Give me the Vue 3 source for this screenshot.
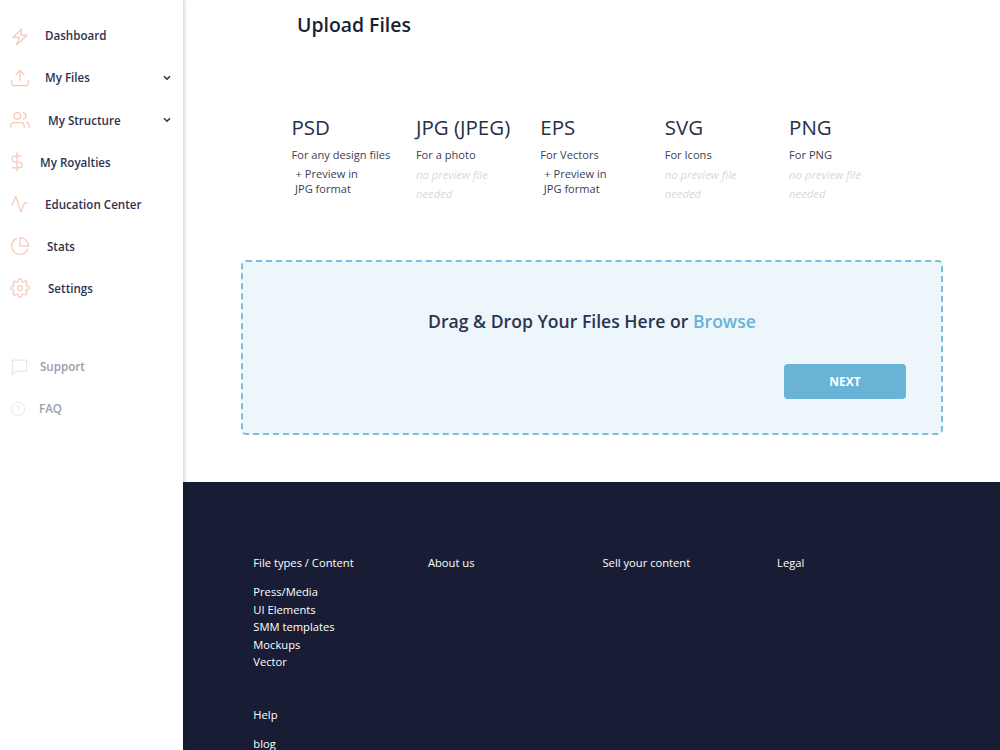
<script setup>
const menu = [
  { label: 'Dashboard', icon: 'bolt', indent: 14, arrow: false },
  { label: 'My Files', icon: 'upload', indent: 14, arrow: true },
  { label: 'My Structure', icon: 'users', indent: 17, arrow: true },
  { label: 'My Royalties', icon: 'dollar', indent: 9, arrow: false },
  { label: 'Education Center', icon: 'pulse', indent: 14, arrow: false },
  { label: 'Stats', icon: 'pie', indent: 16, arrow: false },
  { label: 'Settings', icon: 'gear', indent: 17, arrow: false }
]

const types = [
  { name: 'PSD', use: 'For any design files', note: '+ Preview in JPG format' },
  { name: 'JPG (JPEG)', use: 'For a photo', muted: 'no preview file needed' },
  { name: 'EPS', use: 'For Vectors', note: '+ Preview in JPG format' },
  { name: 'SVG', use: 'For Icons', muted: 'no preview file needed' },
  { name: 'PNG', use: 'For PNG', muted: 'no preview file needed' }
]

const footerCols = ['About us', 'Sell your content', 'Legal']
const footerLinks = ['Press/Media', 'UI Elements', 'SMM templates', 'Mockups', 'Vector']
</script>

<template>
  <div class="page">
    <aside class="sidebar">
      <nav class="menu">
        <a v-for="item in menu" :key="item.label" class="menu-item">
          <span class="ico">
            <svg :class="'i-' + item.icon" viewBox="0 0 24 24" width="20" height="20" fill="none" stroke="#f6c8b8" stroke-width="1.5" stroke-linecap="round" stroke-linejoin="round">
              <path v-if="item.icon === 'bolt'" d="M14 3.5 3.5 13.5H11L8 22.5 20.5 11H13z" />
              <g v-else-if="item.icon === 'upload'">
                <path d="M2 15v4a2 2 0 0 0 2 2h16a2 2 0 0 0 2-2v-4" />
                <path d="M17 8l-5-5-5 5" />
                <path d="M12 3v12" />
              </g>
              <g v-else-if="item.icon === 'users'">
                <path d="M17 21v-2a4 4 0 0 0-4-4H5a4 4 0 0 0-4 4v2" />
                <circle cx="9" cy="7" r="4" />
                <path d="M23 21v-2a4 4 0 0 0-3-3.87" />
                <path d="M16 3.13a4 4 0 0 1 0 7.75" />
              </g>
              <g v-else-if="item.icon === 'dollar'">
                <path d="M12 1v22" />
                <path d="M17 5H9.5a3.5 3.5 0 0 0 0 7h5a3.5 3.5 0 0 1 0 7H6" />
              </g>
              <path v-else-if="item.icon === 'pulse'" d="M2.4 13 7 3l6 18.5L17 11h3.5" />
              <g v-else-if="item.icon === 'pie'">
                <path d="M21.21 15.89A10 10 0 1 1 8 2.83" />
                <path d="M22 12A10 10 0 0 0 12 2v10z" />
              </g>
              <g v-else>
                <circle cx="12" cy="12" r="3" />
                <path d="M19.4 15a1.65 1.65 0 0 0 .33 1.82l.06.06a2 2 0 1 1-2.83 2.83l-.06-.06a1.65 1.65 0 0 0-2.82 1.17V21a2 2 0 0 1-4 0v-.09a1.65 1.65 0 0 0-2.82-1.12l-.06.06a2 2 0 1 1-2.83-2.83l.06-.06a1.65 1.65 0 0 0-1.17-2.82H3a2 2 0 0 1 0-4h.09a1.65 1.65 0 0 0 1.12-2.82l-.06-.06a2 2 0 1 1 2.83-2.83l.06.06a1.65 1.65 0 0 0 1.82.33H9a1.65 1.65 0 0 0 1-1.51V3a2 2 0 0 1 4 0v.09a1.65 1.65 0 0 0 2.82 1.12l.06-.06a2 2 0 1 1 2.83 2.83l-.06.06a1.65 1.65 0 0 0 1.17 2.82H21a2 2 0 0 1 0 4h-.09a1.65 1.65 0 0 0-1.51 1z" />
              </g>
            </svg>
          </span>
          <span class="label" :style="{ marginLeft: item.indent + 'px' }">{{ item.label }}</span>
          <svg v-if="item.arrow" class="chev" viewBox="0 0 8 6" width="8" height="6" fill="none" stroke="#2c3350" stroke-width="1.6">
            <path d="M1 1.2 4 4.2 7 1.2" />
          </svg>
        </a>
      </nav>
      <nav class="menu menu-sub">
        <a class="menu-item sub">
          <span class="ico">
            <svg viewBox="0 0 24 24" width="19" height="19" fill="none" stroke="#e6e7ec" stroke-width="1.5" stroke-linejoin="round">
              <path d="M3 4h18v14H7l-4 4z" />
            </svg>
          </span>
          <span class="label" style="margin-left: 9px">Support</span>
        </a>
        <a class="menu-item sub">
          <span class="ico">
            <svg viewBox="0 0 24 24" width="16" height="16" fill="none" stroke="#e6e7ec" stroke-width="1.5" stroke-linecap="round">
              <circle cx="12" cy="12" r="10" />
              <path d="M9.5 9.5a2.5 2.5 0 0 1 4.8.8c0 1.6-2.3 2-2.3 3.4" />
              <path d="M12 17.2h.01" />
            </svg>
          </span>
          <span class="label" style="margin-left: 8px">FAQ</span>
        </a>
      </nav>
    </aside>

    <div class="main">
      <section class="content">
        <h1 class="title">Upload Files</h1>
        <div class="types">
          <div v-for="t in types" :key="t.name" class="type">
            <div class="type-name">{{ t.name }}</div>
            <div class="type-use">{{ t.use }}</div>
            <div v-if="t.note" class="type-note">{{ t.note }}</div>
            <div v-else class="type-muted">{{ t.muted }}</div>
          </div>
        </div>
        <div class="drop">
          <p class="drop-text">Drag &amp; Drop Your Files Here or <span class="browse">Browse</span></p>
          <button class="next">NEXT</button>
        </div>
      </section>

      <footer class="footer">
        <div class="foot-cols">
          <div class="foot-col">
            <div class="foot-head">File types / Content</div>
            <a v-for="l in footerLinks" :key="l" class="foot-link">{{ l }}</a>
            <a class="foot-link help">Help</a>
            <a class="foot-link blog">blog</a>
          </div>
          <div v-for="c in footerCols" :key="c" class="foot-col">
            <div class="foot-head">{{ c }}</div>
          </div>
        </div>
      </footer>
    </div>
  </div>
</template>

<style scoped>
.page {
  display: flex;
  height: 750px;
  overflow: hidden;
  font-family: "Open Sans", sans-serif;
  color: #1a1f36;
}

.sidebar {
  width: 183px;
  flex-shrink: 0;
  background: #fff;
  box-shadow: 1px 0 4px rgba(0, 0, 0, 0.22);
  position: relative;
  z-index: 1;
  padding-top: 14.8px;
  box-sizing: border-box;
}

.menu-item {
  display: flex;
  align-items: center;
  height: 42.1px;
  padding-left: 10px;
  font-size: 11.6px;
  font-weight: 600;
  color: #2c3350;
}

.ico {
  width: 21px;
  display: flex;
  justify-content: flex-start;
  flex-shrink: 0;
}

.i-dollar {
  margin-left: -3px;
  margin-right: 3px;
}

.chev {
  margin-left: auto;
  margin-right: 12px;
}

.menu-sub {
  margin-top: 36px;
}

.sub {
  color: #9a9daa;
}

.main {
  flex: 1;
  display: flex;
  flex-direction: column;
  min-width: 0;
}

.content {
  height: 482px;
  flex-shrink: 0;
  background: #fff;
  padding: 0 58px;
  box-sizing: border-box;
}

.title {
  margin: 0;
  padding: 11px 0 0 56px;
  font-size: 19.4px;
  line-height: 28px;
  font-weight: 600;
  color: #1a1f36;
}

.types {
  display: grid;
  grid-template-columns: repeat(5, 124.4px);
  margin: 74px 0 0 50.5px;
  height: 116px;
}

.type-name {
  font-size: 20.5px;
  line-height: 28px;
  color: #2a2f45;
}

.type-use {
  font-size: 11.1px;
  line-height: 15px;
  margin-top: 6px;
  color: #3b4156;
}

.type-note {
  font-size: 11.1px;
  line-height: 14.5px;
  margin-top: 5px;
  padding-left: 3.5px;
  text-indent: 0.5px;
  width: 72px;
  color: #3b4156;
}

.type-muted {
  font-size: 11.3px;
  line-height: 19px;
  margin-top: 2.5px;
  width: 100px;
  font-style: italic;
  color: #d8d9de;
}

.drop {
  width: 702px;
  height: 175px;
  margin-top: 31px;
  box-sizing: border-box;
  background: #edf6fb;
  border: 2px dashed #7cbddb;
  border-radius: 5px;
  padding: 47px 35px 0 0;
  display: flex;
  flex-direction: column;
  align-items: flex-end;
}

.drop-text {
  align-self: stretch;
  margin: 0 -35px 0 0;
  text-align: center;
  font-size: 17.6px;
  line-height: 24px;
  font-weight: 600;
  color: #2c3350;
}

.browse {
  color: #68b3d6;
}

.next {
  width: 122px;
  height: 35px;
  margin-top: 31px;
  border: none;
  border-radius: 4px;
  background: #68b3d6;
  color: #fff;
  font-family: inherit;
  font-size: 12px;
  font-weight: 700;
}

.footer {
  flex: 1;
  background: #181d35;
  padding: 73px 0 0 70.3px;
}

.foot-cols {
  display: grid;
  grid-template-columns: repeat(4, 174.6px);
}

.foot-col {
  display: flex;
  flex-direction: column;
}

.foot-head {
  font-size: 11.2px;
  line-height: 16px;
  color: #fff;
  margin-bottom: 12px;
}

.foot-link {
  font-size: 11.2px;
  line-height: 17.6px;
  color: #fff;
}

.help {
  margin-top: 35px;
}

.blog {
  margin-top: 11px;
}
</style>
